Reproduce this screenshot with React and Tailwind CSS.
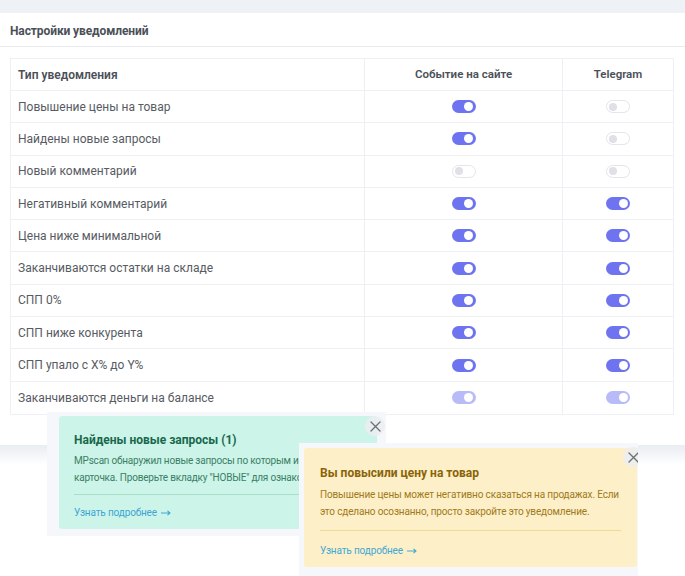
import React from 'react';

const rows = [
  { name: 'Повышение цены на товар', site: 'on', tg: 'off' },
  { name: 'Найдены новые запросы', site: 'on', tg: 'off' },
  { name: 'Новый комментарий', site: 'off', tg: 'off' },
  { name: 'Негативный комментарий', site: 'on', tg: 'on' },
  { name: 'Цена ниже минимальной', site: 'on', tg: 'on' },
  { name: 'Заканчиваются остатки на складе', site: 'on', tg: 'on' },
  { name: 'СПП 0%', site: 'on', tg: 'on' },
  { name: 'СПП ниже конкурента', site: 'on', tg: 'on' },
  { name: 'СПП упало с X% до Y%', site: 'on', tg: 'on' },
  { name: 'Заканчиваются деньги на балансе', site: 'dim', tg: 'dim' },
];

const Toggle = ({ state }) => {
  if (state === 'off') {
    return (
      <span className="relative inline-block w-[24px] h-[13px] rounded-full bg-white border border-[#e3e5ea]">
        <span className="absolute left-[2px] top-[1.5px] w-[8px] h-[8px] rounded-full bg-[#dfe1e6]" />
      </span>
    );
  }
  return (
    <span
      className={
        'relative inline-block w-[24px] h-[13px] rounded-full ' +
        (state === 'dim' ? 'bg-[#b8bbf7]' : 'bg-[#6e74ef]')
      }
    >
      <span className="absolute right-[2.5px] top-[2px] w-[9px] h-[9px] rounded-full bg-white" />
    </span>
  );
};

const CloseBtn = ({ className }) => (
  <button className={'absolute w-[20px] h-[20px] rounded-full bg-[#eceef1]/90 flex items-center justify-center ' + className}>
    <svg width="11" height="11" viewBox="0 0 11 11" fill="none" stroke="#6b6f76" strokeWidth="1.3" strokeLinecap="round">
      <path d="M1 1 L10 10 M10 1 L1 10" />
    </svg>
  </button>
);

const Arrow = () => (
  <svg width="10" height="6" viewBox="0 0 10 6" className="inline-block ml-[4px] -mt-[1px]" fill="none" stroke="currentColor" strokeWidth="1.1">
    <path d="M0 3 H9 M6.5 0.8 L9 3 L6.5 5.2" />
  </svg>
);

export default function App() {
  return (
    <div className="relative w-[685px] h-[576px] overflow-hidden bg-white font-['Roboto','Noto_Sans',sans-serif]">
      <div className="h-[13px] bg-[#eef1f6]" />

      <div className="bg-white">
        <div className="h-[34px] flex items-center px-[10px] border-b border-[#e8eaee]">
          <h3 className="text-[12px] font-bold text-[#4b5058] pt-[2px] tracking-[-0.1px]">Настройки уведомлений</h3>
        </div>

        <div className="px-[10px] pt-[11px] pb-[30px]">
          <div className="w-[664px] border border-[#eef0f4] text-[12px] text-[#575b62]">
            <div className="flex h-[32px] border-b border-[#eef0f4] font-semibold text-[#4b5058]">
              <div className="w-[354px] flex items-center px-[7px] border-r border-[#eef0f4]">Тип уведомления</div>
              <div className="w-[198px] flex items-center justify-center border-r border-[#eef0f4] text-[11.5px]">Событие на сайте</div>
              <div className="flex-1 flex items-center justify-center text-[11.5px]">Telegram</div>
            </div>
            {rows.map((r, i) => (
              <div
                key={r.name}
                className={'flex h-[32.3px] ' + (i < rows.length - 1 ? 'border-b border-[#eef0f4]' : '')}
              >
                <div className="w-[354px] flex items-center px-[7px] border-r border-[#eef0f4]">{r.name}</div>
                <div className="w-[198px] flex items-center justify-center border-r border-[#eef0f4]">
                  <Toggle state={r.site} />
                </div>
                <div className="flex-1 flex items-center justify-center">
                  <Toggle state={r.tg} />
                </div>
              </div>
            ))}
          </div>
        </div>
      </div>
      <div className="h-[20px] bg-gradient-to-b from-[#e9ecf2] to-white" />

      {/* green toast */}
      <div className="absolute left-[47px] top-[412px] w-[339px] h-[124px] bg-[#f6f7fb] pl-[12px] pt-[4px] overflow-hidden">
        <div className="w-[318px] h-[113px] rounded-[3px] bg-[#cdf4e8] pl-[15px] pr-[12px] pt-[16px]">
          <div className="text-[12px] leading-[16px] font-bold text-[#17684c]">Найдены новые запросы (1)</div>
          <p className="mt-[4px] text-[10px] leading-[17px] tracking-[-0.2px] text-[#3a7f66] whitespace-nowrap">
            MPscan обнаружил новые запросы по которым ищется ваша<br />
            карточка. Проверьте вкладку "НОВЫЕ" для ознакомления.
          </p>
          <div className="mt-[8px] border-t border-[#a6dfca]" />
          <div className="mt-[10px] text-[10px] tracking-[-0.15px] text-[#3ea6d5]">
            Узнать подробнее<Arrow />
          </div>
        </div>
        <CloseBtn className="left-[318px] top-[4px]" />
      </div>

      {/* yellow toast */}
      <div className="absolute left-[299px] top-[443px] w-[339px] h-[133px] bg-[#f6f7fb] pl-[5px] pt-[5px] overflow-hidden">
        <div className="w-[333px] h-[119px] rounded-[3px] bg-[#fdefc7] pl-[16px] pr-[16px] pt-[17px]">
          <div className="text-[12px] leading-[16px] font-bold text-[#8a6407]">Вы повысили цену на товар</div>
          <p className="mt-[5px] text-[10px] leading-[17px] tracking-[-0.15px] text-[#a07a1c] whitespace-nowrap">
            Повышение цены может негативно сказаться на продажах. Если<br />
            это сделано осознанно, просто закройте это уведомление.
          </p>
          <div className="mt-[10px] border-t border-[#f2d892]" />
          <div className="mt-[12px] text-[10px] tracking-[-0.15px] text-[#42a9d5]">
            Узнать подробнее<Arrow />
          </div>
        </div>
        <CloseBtn className="left-[324px] top-[4px]" />
      </div>
    </div>
  );
}
